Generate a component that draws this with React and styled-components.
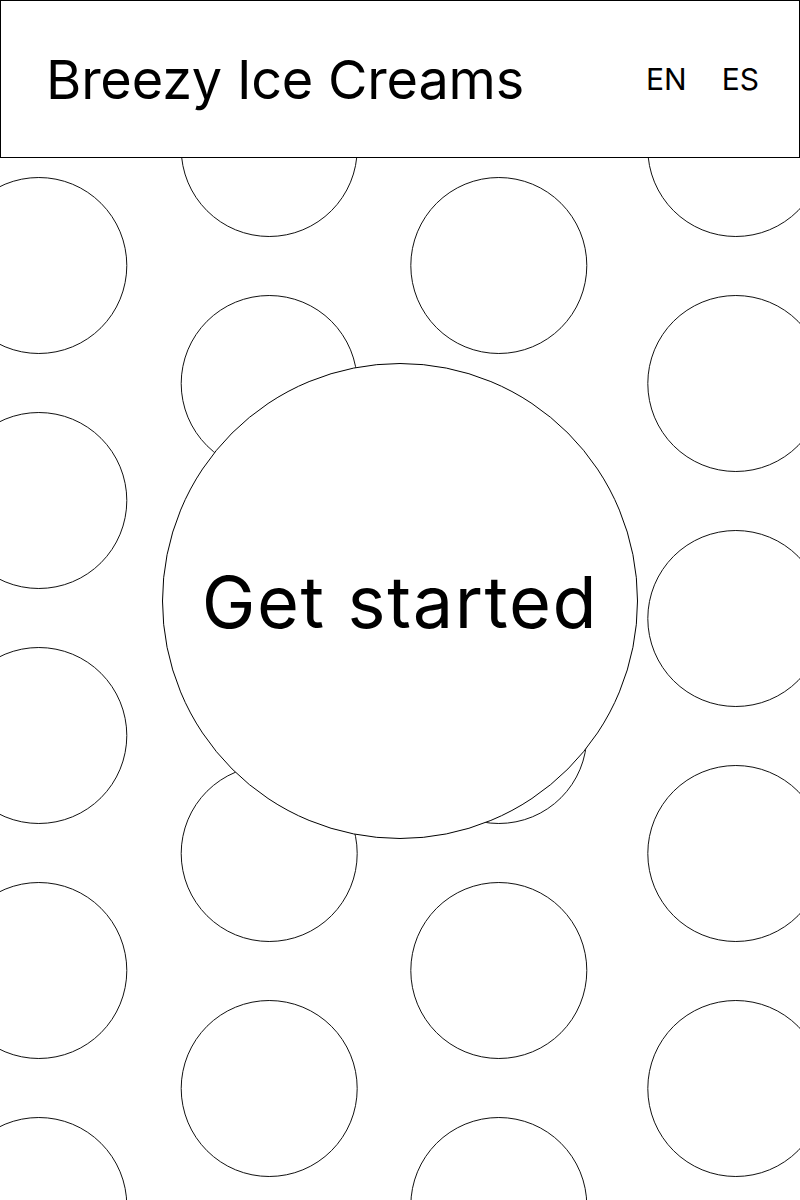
import React from 'react';
import styled, { createGlobalStyle } from 'styled-components';

const GlobalStyle = createGlobalStyle`
  * {
    box-sizing: border-box;
  }
  body {
    margin: 0;
    background: #fff;
    color: #000;
    font-family: Inter, 'Noto Sans', sans-serif;
  }
`;

//배경 원 위치
const COLS = [
  { x: 38.8, ys: [30.5, 265.5, 500.5, 735.5, 970.5, 1205.5] },
  { x: 269.2, ys: [148.5, 383.5, 618.5, 853.5, 1088.5] },
  { x: 498.8, ys: [30.5, 265.5, 500.5, 735.5, 970.5, 1205.5] },
  { x: 735.8, ys: [148.5, 383.5, 618.5, 853.5, 1088.5] },
];

const Bubbles = () => (
  <StyledPattern viewBox="0 0 800 1200" preserveAspectRatio="xMidYMin slice">
    {COLS.map((col) =>
      col.ys.map((y) => (
        <circle
          key={`${col.x}-${y}`}
          cx={col.x}
          cy={y}
          r="88"
          fill="none"
          stroke="#111"
          strokeWidth="1"
        />
      ))
    )}
  </StyledPattern>
);

const App = () => {
  return (
    <StyledPage>
      <GlobalStyle />
      <Bubbles />
      <StyledHeader>
        <h1 className="title">Breezy Ice Creams</h1>
        <StyledLangs>
          <button>EN</button>
          <button>ES</button>
        </StyledLangs>
      </StyledHeader>
      <StyledMain>
        <StyledStart>Get started</StyledStart>
      </StyledMain>
    </StyledPage>
  );
};

export default App;

const StyledPage = styled.div`
  position: relative;
  display: flex;
  flex-direction: column;
  min-height: 100vh;
  overflow: hidden;
`;

const StyledPattern = styled.svg`
  position: absolute;
  inset: 0;
  width: 100%;
  height: 100%;
  z-index: 0;
`;

const StyledHeader = styled.header`
  position: relative;
  z-index: 1;
  display: flex;
  align-items: center;
  justify-content: space-between;
  height: 158px;
  padding: 0 40px 0 45px;
  background: #fff;
  border: 1px solid #000;

  > .title {
    margin: 0;
    font-size: 54px;
    font-weight: 400;
    letter-spacing: -0.2px;
  }
`;

const StyledLangs = styled.nav`
  display: flex;
  gap: 35px;

  > button {
    padding: 0;
    border: none;
    background: none;
    font-family: inherit;
    font-size: 30px;
    color: #000;
    cursor: pointer;
  }
`;

const StyledMain = styled.main`
  position: relative;
  z-index: 1;
  flex: 1;
  display: flex;
  align-items: center;
  justify-content: center;
  padding-bottom: 156px;
`;

const StyledStart = styled.button`
  display: flex;
  align-items: center;
  justify-content: center;
  width: 476px;
  height: 476px;
  padding: 0;
  border: 1px solid #000;
  border-radius: 50%;
  background: #fff;
  font-family: inherit;
  font-size: 72px;
  letter-spacing: 1.6px;
  color: #000;
  cursor: pointer;
`;
